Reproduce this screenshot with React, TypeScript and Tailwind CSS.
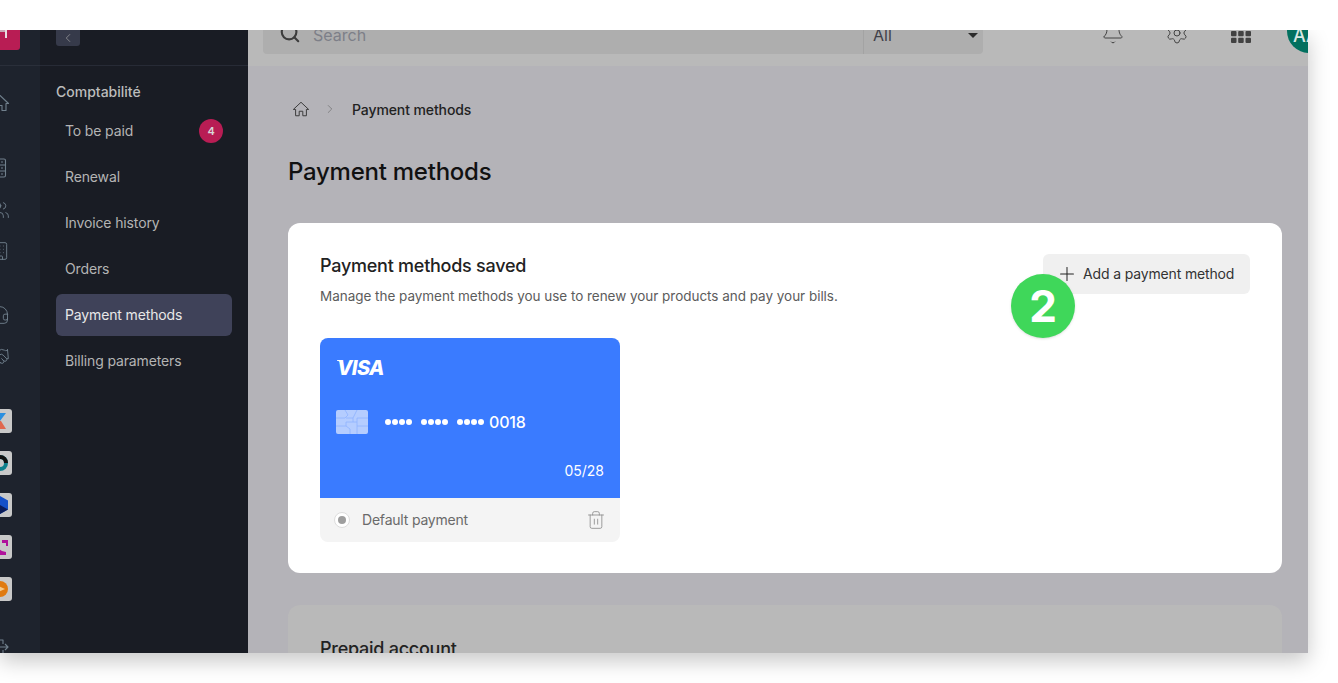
import { Search, ChevronLeft, ChevronRight, Bell, Settings, Plus, Trash2, Users, Building, Headset, Handshake } from "lucide-react";

const navItems = ["To be paid", "Renewal", "Invoice history", "Orders", "Payment methods", "Billing parameters"];

function HomeIcon({ size, className }: { size: number; className?: string }) {
  return (
    <svg width={size} height={size} viewBox="0 0 20 20" fill="none" stroke="currentColor" strokeWidth="1.1" strokeLinejoin="round" className={className}>
      <path d="M1.500 10.500 10 2.500l8.500 8H16v7h-4v-5H8v5H4v-7z" />
    </svg>
  );
}

function ServerIcon({ className }: { className?: string }) {
  return (
    <svg width="20" height="20" viewBox="0 0 20 20" fill="none" stroke="currentColor" strokeWidth="1.1" className={className}>
      <rect x="2.500" y="1" width="13" height="18" rx="1.500" />
      <path d="M2.500 7h13M2.500 13h13M11 4h2M11 10h2M11 16h2" />
    </svg>
  );
}

function ExitIcon({ className }: { className?: string }) {
  return (
    <svg width="20" height="20" viewBox="0 0 20 20" fill="none" stroke="currentColor" strokeWidth="1.1" strokeLinejoin="round" className={className}>
      <path d="M5 3h8v4M13 13v4H5M6 10h12M15 7l3 3-3 3" />
    </svg>
  );
}

function GridIcon() {
  return (
    <svg width="20" height="12" viewBox="0 0 20 12" fill="currentColor" className="ml-[42px] mt-[12px]">
      <rect x="0" y="0" width="5.500" height="5.200" rx="1" />
      <rect x="7.200" y="0" width="5.500" height="5.200" rx="1" />
      <rect x="14.500" y="0" width="5.500" height="5.200" rx="1" />
      <rect x="0" y="6.800" width="5.500" height="5.200" rx="1" />
      <rect x="7.200" y="6.800" width="5.500" height="5.200" rx="1" />
      <rect x="14.500" y="6.800" width="5.500" height="5.200" rx="1" />
    </svg>
  );
}

function Tile({ children }: { children: React.ReactNode }) {
  return (
    <div className="w-6 h-6 shrink-0 rounded-[3px] bg-[#c8c8c8] flex items-center justify-center overflow-hidden mb-[18px]">
      {children}
    </div>
  );
}

function Rail() {
  return (
    <div className="w-10 shrink-0 bg-[#1e232d] overflow-hidden">
      <div className="h-9 flex items-start border-b border-[#2a2f3a]">
        <div className="w-10 h-10 shrink-0 -ml-5 -mt-5 rounded-[3px] bg-[#b81d54] flex items-start justify-end">
          <svg width="20" height="28" viewBox="0 0 20 28" className="shrink-0">
            <path d="M0 20h7v2H0z" fill="#c9a8b6" />
            <path d="M5 20h2v8H5z" fill="#e8dde2" />
          </svg>
        </div>
      </div>
      <div className="w-10 -ml-5 flex flex-col items-center text-[#71808d]">
        <HomeIcon size={20} className="mt-[27px] shrink-0" />
        <ServerIcon className="mt-[45px] shrink-0" />
        <Users size={20} strokeWidth={1.1} className="mt-[22px] shrink-0" />
        <Building size={20} strokeWidth={1.1} className="mt-[21px] shrink-0" />
        <Headset size={20} strokeWidth={1.1} className="mt-[44px] shrink-0" />
        <Handshake size={20} strokeWidth={1.1} className="mt-[22px] mb-[42px] shrink-0" />
        <Tile>
          <svg width="24" height="24" viewBox="0 0 24 24">
            <path d="M6 4h6l-4 8 4 8H6l-4-8z" fill="#2a8fe0" />
            <path d="M12 4h6l-6 8H8z" fill="#2a8fe0" />
            <path d="M9 12h4l5 8h-6z" fill="#e0674d" />
          </svg>
        </Tile>
        <Tile>
          <svg width="24" height="24" viewBox="0 0 24 24">
            <circle cx="12" cy="12" r="8" fill="#0d7f8c" />
            <circle cx="12" cy="12" r="4" fill="#c8c8c8" />
            <path d="M12 8a4 4 0 0 1 4 4h4a8 8 0 0 0-8-8z" fill="#111" />
          </svg>
        </Tile>
        <Tile>
          <svg width="24" height="24" viewBox="0 0 24 24">
            <path d="M12 3l8 4.500v9L12 21l-8-4.500v-9z" fill="#1450c8" />
            <path d="M12 12l8 4.500L12 21z" fill="#0b1d59" />
          </svg>
        </Tile>
        <Tile>
          <svg width="24" height="24" viewBox="0 0 24 24">
            <path d="M14 5h6v6h-2V8h-4zM3 14h8l3 2 4 1v3H3z" fill="#b0129b" />
          </svg>
        </Tile>
        <Tile>
          <svg width="24" height="24" viewBox="0 0 24 24">
            <circle cx="12" cy="12" r="8" fill="#e07a10" />
            <path d="M8 8l9 4-9 4z" fill="#f4c98a" />
          </svg>
        </Tile>
        <ExitIcon className="mt-[18px] shrink-0" />
      </div>
    </div>
  );
}

function Sidebar() {
  return (
    <div className="w-[208px] shrink-0 bg-[#191c24]">
      <div className="h-9 border-b border-[#272b36] px-4">
        <div className="w-6 h-[16px] rounded-b-[3px] bg-[#363a4a] flex items-center justify-center text-[#aaaaaa]">
          <ChevronLeft size={14} strokeWidth={1.1} />
        </div>
      </div>
      <div className="px-4 pt-[16px]">
        <div className="text-[14px] leading-[20px] font-medium text-[#bcbcbc] mb-[8px]">Comptabilité</div>
        <div className="flex flex-col gap-1">
          {navItems.map((item) => (
            <div
              key={item}
              className={
                "h-[42px] rounded-md px-[9px] flex items-center justify-between text-[14px] tracking-[-0.14px] " +
                (item === "Payment methods" ? "bg-[#3f4259] text-[#e8e8e8]" : "text-[#b4b4b4]")
              }
            >
              <span className="pb-[1px]">{item}</span>
              {item === "To be paid" && (
                <span className="w-6 h-6 rounded-full bg-[#b81d54] text-[#d8d8d8] text-[11px] font-semibold flex items-center justify-center">4</span>
              )}
            </div>
          ))}
        </div>
      </div>
    </div>
  );
}

function TopBar() {
  return (
    <div className="h-9 shrink-0 bg-[#b9b9b9] flex items-end pb-3 pl-[15px] relative">
      <div className="w-[720px] h-[50px] flex rounded-[4px] bg-[#aeaeae] items-end text-[16px]">
        <div className="flex-1 flex items-end pb-[9px] pl-[16px]">
          <Search size={22} strokeWidth={2.3} className="text-[#3c3c3c] mb-[1px]" />
          <span className="ml-[12px] text-[#7d7f88] leading-[20px]">Search</span>
        </div>
        <div className="w-[120px] h-full border-l border-[#a3a3a3] flex items-end justify-between pl-[9px] pr-[5px] pb-[9px] text-[#3f4048]">
          <span className="leading-[20px]">All</span>
          <span className="w-0 h-0 mb-[7px] border-x-[5px] border-x-transparent border-t-[5px] border-t-[#2b2b2b]" />
        </div>
      </div>
      <div className="flex items-center ml-[133px] text-[#424242] h-[44px] absolute bottom-[13px] left-[720px]">
        <Bell size={24} strokeWidth={1} className="mt-[4px]" />
        <Settings size={24} strokeWidth={1} className="ml-[40px] mt-[4px]" />
        <GridIcon />
        <div className="w-[44px] h-[44px] ml-[36px] rounded-full bg-[#02705f] text-[#d8e8e4] text-[18px] font-medium flex items-center justify-center pt-[8px] pr-[6px] shrink-0">AA</div>
      </div>
    </div>
  );
}

function Dots() {
  return (
    <span className="flex gap-[1px]">
      <i className="w-[6px] h-[6px] rounded-full bg-white" />
      <i className="w-[6px] h-[6px] rounded-full bg-white" />
      <i className="w-[6px] h-[6px] rounded-full bg-white" />
      <i className="w-[6px] h-[6px] rounded-full bg-white" />
    </span>
  );
}

function CreditCard() {
  return (
    <div className="w-[300px] rounded-lg overflow-hidden mt-[33px]">
      <div className="h-40 bg-[#3a7bff] px-4 pt-[18px] pb-[17px] text-white flex flex-col">
        <span className="relative self-start ml-[1px] text-[20px] leading-[24px] font-extrabold italic tracking-[-0.6px]">
          VISA
          <svg width="6" height="6" viewBox="0 0 6 6" className="absolute left-0 top-[4px]" fill="white">
            <path d="M0 0h5l1 5C5 3 3 1 0 .8z" />
          </svg>
        </span>
        <div className="flex items-center mt-[30px]">
          <svg width="32" height="24" viewBox="0 0 32 24" className="shrink-0">
            <rect width="32" height="24" rx="2" fill="#b5cdff" />
            <path d="M0 8h9l3-3-3-5M0 16h10l4 3v5M32 8H21v8h11M21 12H10v4M10 8h7v4M21 0l-4 8M21 16v8" stroke="#8fb3ff" strokeWidth="0.8" fill="none" />
          </svg>
          <span className="ml-[17px] text-[16px] flex items-center gap-[9px] tracking-[-0.2px] font-medium">
            <Dots />
            <Dots />
            <span className="flex items-center gap-[5px]">
              <Dots />
              <span>0018</span>
            </span>
          </span>
        </div>
        <span className="mt-auto self-end text-[14px] leading-[20px]">05/28</span>
      </div>
      <div className="h-11 bg-[#f4f4f4] flex items-center pl-[14px] pr-[14px] text-[14px] text-[#6a6a6a]">
        <span className="w-4 h-4 rounded-full bg-white border border-[#dddddd] flex items-center justify-center">
          <span className="w-2 h-2 rounded-full bg-[#9e9e9e]" />
        </span>
        <span className="ml-3 pb-[1px] tracking-[-0.2px]">Default payment</span>
        <Trash2 size={20} strokeWidth={1} className="ml-auto text-[#8c8c8c]" />
      </div>
    </div>
  );
}

export default function App() {
  return (
    <div className="h-[683px] bg-white overflow-hidden" style={{ fontFamily: "Inter, sans-serif" }}>
      <div className="h-[30px] bg-white relative z-10" />
      <div className="w-[1308px] h-[623px] flex overflow-hidden shadow-[0_8px_20px_rgba(0,0,0,0.22)]">
        <Rail />
        <Sidebar />
        <div className="flex-1 min-w-0 flex flex-col bg-[#b4b3b8] overflow-hidden">
          <TopBar />
          <div className="pl-10 pr-[26px] pt-[31px]">
            <div className="flex items-center h-[24px] text-[14px] font-medium text-[#222222] tracking-[-0.1px]">
              <HomeIcon size={18} className="text-[#3c3c3c] ml-[4px]" />
              <ChevronRight size={14} strokeWidth={1} className="ml-[13px] text-[#606060]" />
              <span className="ml-[15px]">Payment methods</span>
            </div>
            <h1 className="mt-[35px] text-[24px] leading-[32px] font-medium text-[#111111] tracking-[-0.25px]">Payment methods</h1>
            <div className="mt-[35px] h-[350px] bg-white rounded-xl px-8 pt-[31px]">
              <div className="flex justify-between">
                <div>
                  <h2 className="text-[18px] leading-[24px] font-medium text-[#222222] tracking-[-0.25px]">Payment methods saved</h2>
                  <p className="mt-[9px] text-[13.500px] leading-[18px] text-[#5c5c5c] tracking-[-0.03px]">Manage the payment methods you use to renew your products and pay your bills.</p>
                </div>
                <div className="relative">
                  <div className="h-10 w-[207px] rounded-md bg-[#f0f0f0] flex items-center pl-[13px] text-[14px] text-[#333333] tracking-[-0.15px] pb-[1px]">
                    <Plus size={22} strokeWidth={1.1} className="mr-[5px] text-[#222222]" />
                    Add a payment method
                  </div>
                  <div className="absolute left-[-32px] top-[20px] w-16 h-16 rounded-full bg-[#3fd75a] text-white text-[44px] font-bold flex items-center justify-center shadow-sm">2</div>
                </div>
              </div>
              <CreditCard />
            </div>
            <div className="mt-8 h-[200px] bg-[#b9b9b9] rounded-xl px-8 pt-[32px]">
              <h2 className="text-[18px] leading-[24px] font-medium text-[#222222] tracking-[-0.25px]">Prepaid account</h2>
            </div>
          </div>
        </div>
      </div>
    </div>
  );
}
